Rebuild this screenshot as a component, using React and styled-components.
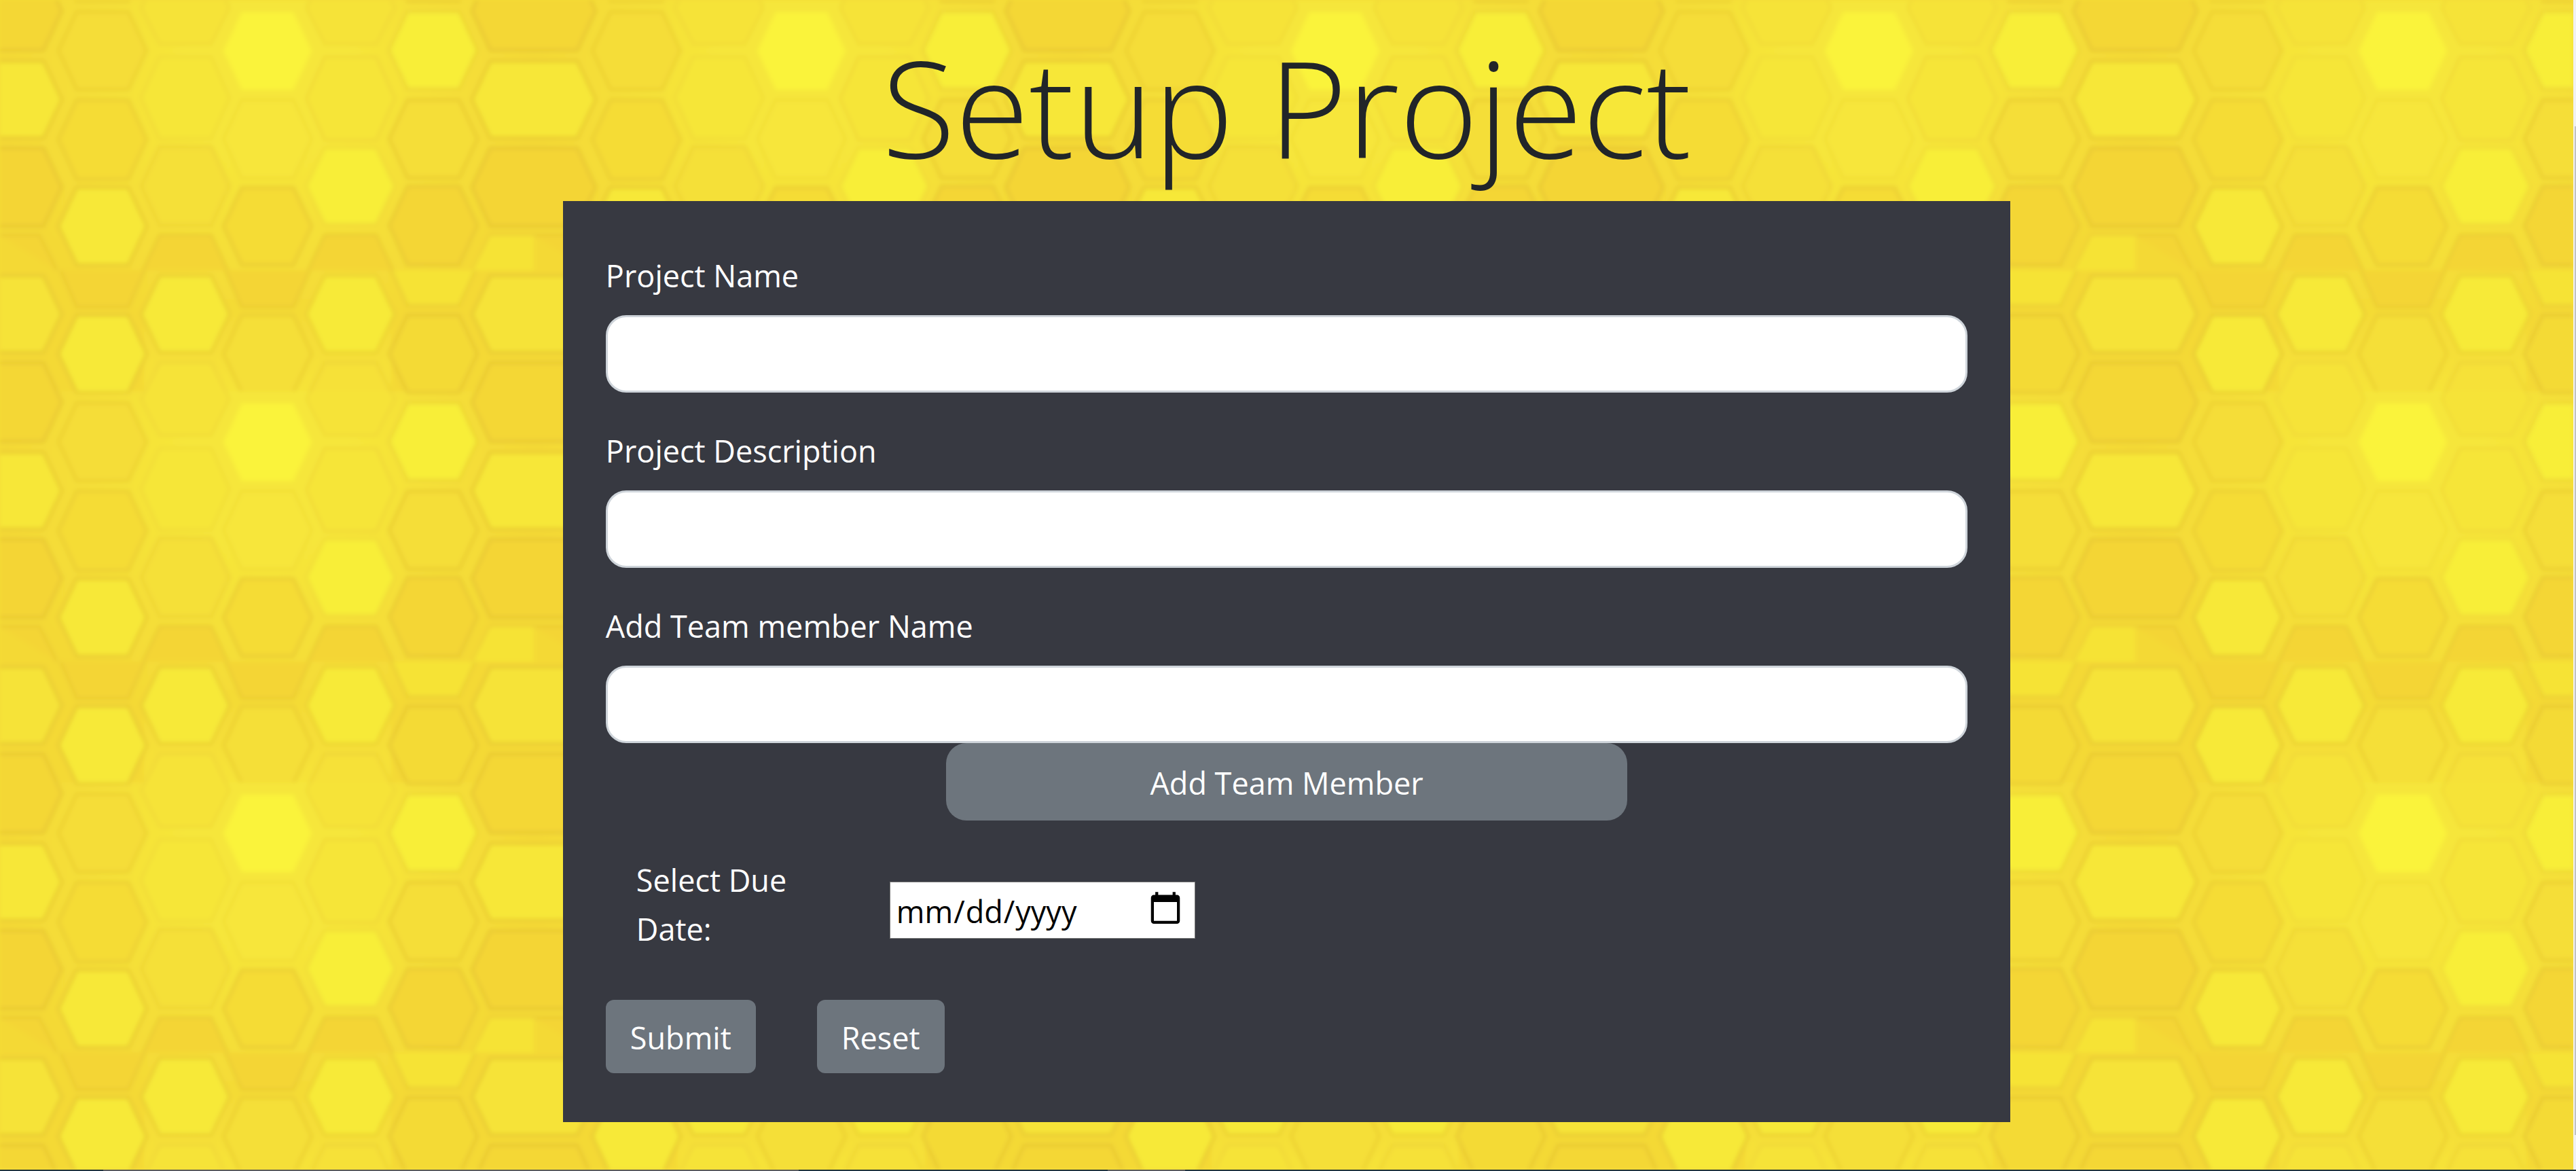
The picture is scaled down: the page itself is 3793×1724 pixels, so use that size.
import React from "react";
import styled, { createGlobalStyle } from "styled-components";

const GlobalStyle = createGlobalStyle`
  *, *::before, *::after { box-sizing: border-box; }
  body {
    margin: 0;
    background: #f5dc36;
    color: #212529;
    font-family: "Open Sans", "Noto Sans", sans-serif;
    font-size: 45px;
    line-height: 72px;
  }
`;

const Window = styled.div`
  display: grid;
  grid-template-columns: minmax(0, 1fr) 4px;
  grid-template-rows: 1fr 2px;
  min-height: 100vh;
`;

const Comb = styled.svg`
  grid-area: 1 / 1;
  display: block;
  width: 100%;
  height: 100%;
`;

const Page = styled.main`
  grid-area: 1 / 1;
  position: relative;
  display: flex;
  flex-direction: column;
  align-items: center;
`;

const Title = styled.h1`
  margin: 0;
  padding: 28px 0 12px;
  font-size: 198px;
  line-height: 256px;
  font-weight: 300;
`;

const Panel = styled.form`
  width: 56.25%;
  padding: 72px 63px;
  background: #373941;
  color: #fff;
`;

const Field = styled.div`
  display: flex;
  flex-direction: column;
  gap: 20px;
  margin-bottom: ${(p) => (p.$last ? 0 : 48)}px;
`;

const FieldLabel = styled.label`
  line-height: 76px;
`;

const TextInput = styled.input`
  width: 100%;
  height: 114px;
  padding: 18px 36px;
  border: 3px solid #ced4da;
  border-radius: 30px;
  background: #fff;
  font: inherit;
`;

const Button = styled.button`
  padding: 20px 36px 16px;
  border: 0;
  border-radius: 12px;
  background: #6d757d;
  color: #fff;
  font: inherit;
`;

const AddButton = styled(Button)`
  display: block;
  width: 50%;
  height: 114px;
  margin: 0 auto;
  border-radius: 30px;
`;

const DateRow = styled.div`
  display: flex;
  align-items: center;
  padding: 52px 45px 68px;
`;

const DateLabel = styled.label`
  width: 288px;
  margin-right: 85px;
`;

const DateInput = styled.input`
  width: 450px;
  height: 84px;
  margin-top: 16px;
  padding: 4px 8px 0;
  border: 1px solid #767676;
  border-radius: 0;
  background: #fff;
  color: #000;
  font: inherit;

  &::-webkit-calendar-picker-indicator {
    width: 54px;
    height: 54px;
    padding: 0;
    margin: 0 8px 8px 0;
    background-size: contain;
  }
`;

const Actions = styled.div`
  display: flex;
  gap: 90px;
`;

const ScrollTrack = styled.div`
  grid-area: 1 / 2;
  display: flex;
  justify-content: flex-end;
  padding: 186px 0 51px;
  background: #f1f1f1;
`;

const ScrollThumb = styled.div`
  width: 2px;
  background: #c1c1c1;
`;

const BottomEdge = styled.div`
  grid-area: 2 / 1 / 3 / 3;
  background: linear-gradient(
    to right,
    #22353c 4%, #5c5c5a 4%, #5c5c5a 31%,
    #22353c 31%, #22353c 43%, #5c5c5a 43%,
    #5c5c5a 46%, #22353c 46%
  );
`;

const TILE_W = 786;
const TILE_H = 576;

// Cell columns of one tile: centre x, then [top, bottom, fill, outline opacity]
const columns = [
  { x: 151, cells: [
    [17, 132, "#f5dd37", 0.3], [147, 264, "#f5dc36", 0.35], [276, 390, "#f7e838", 0.45],
    [464, 578, "#f7e938", 0.5] ] },
  { x: 273, cells: [
    [-42, 65, "#f6e339", 0.16], [84, 204, "#f6e639", 0.16], [216, 332, "#f5e037", 0.25],
    [406, 519, "#f7e938", 0.4], [534, 641, "#f6e339", 0.2] ] },
  { x: 394, cells: [
    [18, 132, "#faf33b", 0], [147, 262, "#f7e63a", 0.16], [276, 390, "#f5dc36", 0.4],
    [464, 578, "#f5df37", 0.35] ] },
  { x: 516, cells: [
    [-42, 65, "#f6e339", 0.16], [84, 206, "#f6e539", 0.2], [218, 330, "#f8ee39", 0.2],
    [406, 519, "#f7ea38", 0.35], [534, 641, "#f6e138", 0.25] ] },
  { x: 638, cells: [
    [17, 131, "#f8ee39", 0.3], [147, 262, "#f5de37", 0.4], [274, 390, "#f4d635", 0.4],
    [464, 578, "#f4da35", 0.45] ] },
];

const cellPath = (x, top, bottom, half = 38) => {
  const mid = (top + bottom) / 2;
  const tip = half + 27;
  return `M${x - half} ${top}H${x + half}L${x + tip} ${mid}L${x + half} ${bottom}H${x - half}L${x - tip} ${mid}Z`;
};

// The wide cells lie across the seam between two tiles
const wideCells = [
  [-42, 74, "#f4d735"], [90, 203, "#f7e738"], [218, 333, "#f4d534"],
  [406, 519, "#f6e337"], [534, 650, "#f4d735"],
];

function Honeycomb() {
  return (
    <Comb aria-hidden="true">
      <defs>
        <radialGradient id="glow" gradientUnits="userSpaceOnUse" cx="394" cy="110" r="400">
          <stop offset="0.3" stopColor="#f6e63a" />
          <stop offset="1" stopColor="#f4d936" />
        </radialGradient>
        <linearGradient id="foot" x1="0" y1="0" x2="0" y2="1">
          <stop offset="0" stopColor="#f4da36" />
          <stop offset="1" stopColor="#f6e339" />
        </linearGradient>
        <filter id="soft" x="0" y="0" width="100%" height="100%">
          <feGaussianBlur stdDeviation="3" />
        </filter>
        <pattern id="comb" width={TILE_W} height={TILE_H} patternUnits="userSpaceOnUse">
          <rect width={TILE_W} height={TILE_H} fill="url(#glow)" />
          <rect x="212" y="440" width="364" height="136" fill="url(#foot)" />
          <g stroke="#dfb92c" strokeWidth="5">
            {columns.map(({ x, cells }) =>
              cells.map(([top, bottom, fill, o]) => (
                <path key={`${x}-${top}`} d={cellPath(x, top, bottom)} fill={fill} strokeOpacity={o} />
              ))
            )}
            <path d={cellPath(151, -112, 2)} fill="#f7e938" strokeOpacity="0.4" />
            <path d={cellPath(638, -112, 2)} fill="#f4da35" strokeOpacity="0.4" />
            {[0, TILE_W].map((x) =>
              wideCells.map(([top, bottom, fill]) => (
                <path key={`${x}-${top}`} d={cellPath(x, top, bottom, 64)} fill={fill} strokeOpacity="0.45" />
              ))
            )}
          </g>
          <g stroke="#dfb92c" strokeWidth="5" strokeOpacity="0.35" fill="#f4d534">
            {[151, 394].map((x) => (
              <path key={x} d={`M${x - 62} 398L${x - 38} 452H${x + 38}L${x + 62} 398`} />
            ))}
            {[273, 516].map((x) => (
              <path key={x} d={`M${x - 62} 398L${x - 38} 346H${x + 38}L${x + 62} 398`} />
            ))}
            <path d="M0 346H58L84 398" />
            <path d="M576 398L600 450H676L700 398" fill="#f6e336" />
            <path d="M696 398L722 346H786" fill="none" />
            <path d="M696 398L722 347H786V398Z" fill="#f6e336" stroke="none" />
          </g>
        </pattern>
      </defs>
      <rect width="100%" height="100%" fill="url(#comb)" filter="url(#soft)" />
    </Comb>
  );
}

export default function App() {
  return (
    <>
      <GlobalStyle />
      <Window>
        <Honeycomb />
        <Page>
          <Title>Setup Project</Title>
          <Panel onSubmit={(e) => e.preventDefault()}>
            <Field>
              <FieldLabel htmlFor="project-name">Project Name</FieldLabel>
              <TextInput id="project-name" type="text" />
            </Field>
            <Field>
              <FieldLabel htmlFor="project-description">Project Description</FieldLabel>
              <TextInput id="project-description" type="text" />
            </Field>
            <Field $last>
              <FieldLabel htmlFor="member-name">Add Team member Name</FieldLabel>
              <TextInput id="member-name" type="text" />
            </Field>
            <AddButton type="button">Add Team Member</AddButton>
            <DateRow>
              <DateLabel htmlFor="due-date">Select Due Date:</DateLabel>
              <DateInput id="due-date" type="date" />
            </DateRow>
            <Actions>
              <Button type="submit">Submit</Button>
              <Button type="reset">Reset</Button>
            </Actions>
          </Panel>
        </Page>
        <ScrollTrack>
          <ScrollThumb />
        </ScrollTrack>
        <BottomEdge />
      </Window>
    </>
  );
}
